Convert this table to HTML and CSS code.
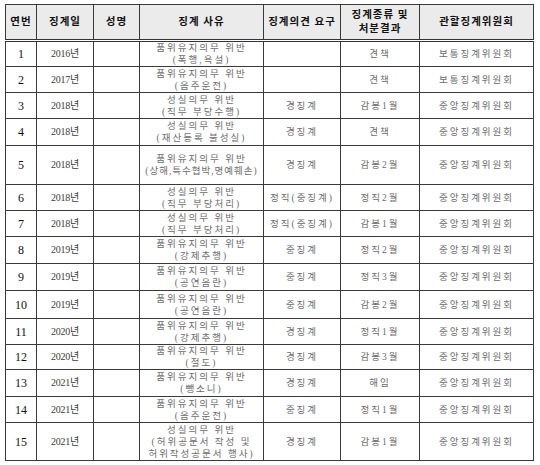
FILE: index.html
```html
<!DOCTYPE html>
<html lang="ko">
<head>
<meta charset="utf-8">
<link rel="stylesheet" href="styles.css">
</head>
<body>
<div class="wrap">
<table class="disc">
<colgroup>
<col class="c1"><col class="c2"><col class="c3"><col class="c4"><col class="c5"><col class="c6"><col class="c7">
</colgroup>
<thead>
<tr class="h">
<th>연번</th><th>징계일</th><th>성명</th><th>징계 사유</th><th>징계의견 요구</th><th>징계종류 및<br>처분결과</th><th>관할징계위원회</th>
</tr>
</thead>
<tbody>
<tr class="r25"><td class="no">1</td><td class="yr">2016년</td><td></td><td>품위유지의무 위반<br>(폭행,욕설)</td><td></td><td>견책</td><td>보통징계위원회</td></tr>
<tr class="r26"><td class="no">2</td><td class="yr">2017년</td><td></td><td>품위유지의무 위반<br>(음주운전)</td><td></td><td>견책</td><td>보통징계위원회</td></tr>
<tr class="r26"><td class="no">3</td><td class="yr">2018년</td><td></td><td>성실의무 위반<br>(직무 부당수행)</td><td>경징계</td><td>감봉1월</td><td>중앙징계위원회</td></tr>
<tr class="r27"><td class="no">4</td><td class="yr">2018년</td><td></td><td>성실의무 위반<br>(재산등록 불성실)</td><td>경징계</td><td>견책</td><td>중앙징계위원회</td></tr>
<tr class="r39"><td class="no">5</td><td class="yr">2018년</td><td></td><td>품위유지의무 위반<br><span class="tight">(상해,특수협박,명예훼손)</span></td><td>경징계</td><td>감봉2월</td><td>중앙징계위원회</td></tr>
<tr class="r26"><td class="no">6</td><td class="yr">2018년</td><td></td><td>성실의무 위반<br>(직무 부당처리)</td><td>정직(중징계)</td><td>정직2월</td><td>중앙징계위원회</td></tr>
<tr class="r26"><td class="no">7</td><td class="yr">2018년</td><td></td><td>성실의무 위반<br>(직무 부당처리)</td><td>정직(중징계)</td><td>감봉1월</td><td>중앙징계위원회</td></tr>
<tr class="r27"><td class="no">8</td><td class="yr">2019년</td><td></td><td>품위유지의무 위반<br>(강제추행)</td><td>중징계</td><td>정직2월</td><td>중앙징계위원회</td></tr>
<tr class="r27"><td class="no">9</td><td class="yr">2019년</td><td></td><td>품위유지의무 위반<br>(공연음란)</td><td>중징계</td><td>정직3월</td><td>중앙징계위원회</td></tr>
<tr class="r28"><td class="no">10</td><td class="yr">2019년</td><td></td><td>품위유지의무 위반<br>(공연음란)</td><td>중징계</td><td>감봉2월</td><td>중앙징계위원회</td></tr>
<tr class="r26"><td class="no">11</td><td class="yr">2020년</td><td></td><td>품위유지의무 위반<br>(강제추행)</td><td>경징계</td><td>정직1월</td><td>중앙징계위원회</td></tr>
<tr class="r25"><td class="no">12</td><td class="yr">2020년</td><td></td><td>품위유지의무 위반<br>(절도)</td><td>경징계</td><td>감봉3월</td><td>중앙징계위원회</td></tr>
<tr class="r27"><td class="no">13</td><td class="yr">2021년</td><td></td><td>품위유지의무 위반<br>(뺑소니)</td><td>경징계</td><td>해임</td><td>중앙징계위원회</td></tr>
<tr class="r26"><td class="no">14</td><td class="yr">2021년</td><td></td><td>품위유지의무 위반<br>(음주운전)</td><td>중징계</td><td>정직1월</td><td>중앙징계위원회</td></tr>
<tr class="r38"><td class="no">15</td><td class="yr">2021년</td><td></td><td>성실의무 위반<br>(허위공문서 작성 및<br>허위작성공문서 행사)</td><td>경징계</td><td>감봉1월</td><td>중앙징계위원회</td></tr>
</tbody>
</table>
</div>
</body>
</html>
```
FILE: styles.css
```css
html, body {
  margin: 0;
  padding: 0;
  background: #ffffff;
}
.wrap {
  padding: 4px 0 0 5px;
}
.disc {
  border-collapse: collapse;
  table-layout: fixed;
  width: 528px;
  font-family: "Liberation Serif", "Noto Sans CJK KR", serif;
  font-size: 9.5px;
  line-height: 12px;
  letter-spacing: 2px;
  color: #6c6c6c;
  border: 1px solid #333;
}
.c1 { width: 31px; }
.c2 { width: 57px; }
.c3 { width: 46px; }
.c4 { width: 124px; }
.c5 { width: 77px; }
.c6 { width: 79px; }
.c7 { width: 114px; }
.disc th, .disc td {
  border: 1px solid #3a3a3a;
  padding: 0;
  text-align: center;
  vertical-align: middle;
  white-space: nowrap;
  overflow: hidden;
}
.disc th {
  background: #ebebeb;
  color: #111;
  font-weight: 700;
  font-size: 10.5px;
  line-height: 14px;
  letter-spacing: 1px;
  border-bottom: 3px double #333;
}
.h { height: 36px; }
.no {
  color: #111;
  font-size: 12px;
  letter-spacing: 0;
}
.yr {
  color: #3c3c3c;
  font-size: 10px;
  letter-spacing: -0.2px;
}
.tight { letter-spacing: 1px; }
.r25 { height: 25px; }
.r26 { height: 26px; }
.r27 { height: 27px; }
.r28 { height: 28px; }
.r38 { height: 38px; }
.r39 { height: 39px; }
```
